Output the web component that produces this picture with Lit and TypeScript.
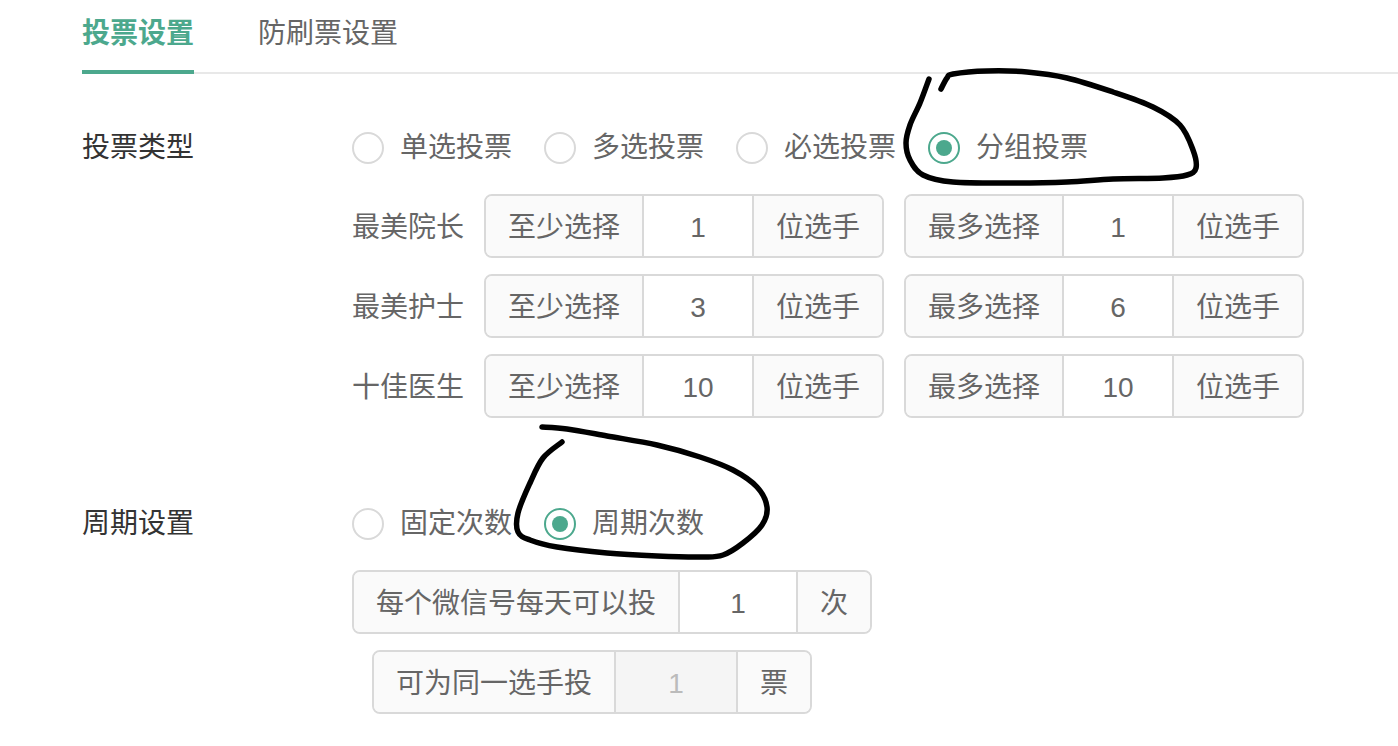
import { LitElement, html, css, svg } from "lit";
import { customElement } from "lit/decorators.js";

type Pt = [number, number];

const strokeA: Pt[] = [[929,79],[920,103],[910,125],[906,143],[910,160],[923,175],[953,182],[1013,183],[1067,182],[1113,179],[1163,178],[1187,175],[1196,168],[1193,150],[1180,125],[1153,107],[1113,92],[1067,78],[1027,72],[987,71],[953,74],[947,78],[941,89]];
const strokeB: Pt[] = [[542,427],[567,429],[607,436],[657,445],[700,457],[733,470],[757,487],[767,507],[762,525],[743,543],[723,555],[703,557],[657,556],[607,553],[557,547],[530,540],[518,532],[518,513],[530,483],[543,458],[562,442]];

function smooth(p: Pt[]): string {
  let d = `M${p[0][0]} ${p[0][1]}`;
  for (let i = 0; i < p.length - 1; i++) {
    const a = p[Math.max(i - 1, 0)], b = p[i], c = p[i + 1], e = p[Math.min(i + 2, p.length - 1)];
    const c1x = b[0] + (c[0] - a[0]) / 6, c1y = b[1] + (c[1] - a[1]) / 6;
    const c2x = c[0] - (e[0] - b[0]) / 6, c2y = c[1] - (e[1] - b[1]) / 6;
    d += `C${c1x.toFixed(1)} ${c1y.toFixed(1)} ${c2x.toFixed(1)} ${c2y.toFixed(1)} ${c[0]} ${c[1]}`;
  }
  return d;
}

@customElement("app-root")
export class AppRoot extends LitElement {
  static styles = css`
    :host {
      display: block;
      position: relative;
      height: 746px;
      overflow: hidden;
      background: #fff;
      color: #666;
      font: 28px/40px "Liberation Sans", "Noto Sans CJK SC", sans-serif;
    }
    .page { padding-left: 82px; }
    .tabs {
      display: flex;
      gap: 64px;
      height: 72px;
      border-bottom: 2px solid #e8e8e8;
      box-sizing: content-box;
    }
    .tab { padding-top: 14px; height: 58px; position: relative; }
    .tab.active { color: #4ca88d; font-weight: 700; }
    .tab.active::after {
      content: "";
      position: absolute;
      left: 0;
      right: 0;
      bottom: -2px;
      height: 4px;
      background: #4ca88d;
    }
    .row { display: grid; grid-template-columns: 270px 1fr; }
    .row.first { margin-top: 58px; }
    .row.second { margin-top: 90px; }
    .label { color: #333; height: 32px; line-height: 32px; }
    .content { display: flex; flex-direction: column; }
    .radios { display: flex; gap: 32px; height: 32px; }
    .radio { display: flex; align-items: center; gap: 16px; width: 160px; }
    .dot {
      width: 32px;
      height: 32px;
      box-sizing: border-box;
      border: 2px solid #d9d9d9;
      border-radius: 50%;
      flex: none;
      display: flex;
      align-items: center;
      justify-content: center;
    }
    .radio.on .dot { border-color: #4ca88d; }
    .radio.on .dot::after {
      content: "";
      width: 16px;
      height: 16px;
      border-radius: 50%;
      background: #4ca88d;
    }
    .grp-rows { display: flex; flex-direction: column; gap: 16px; margin-top: 30px; }
    .grp-row { display: flex; align-items: center; }
    .name { width: 132px; flex: none; padding-top: 4px; }
    .grp {
      display: inline-flex;
      align-items: stretch;
      height: 64px;
      box-sizing: border-box;
      border: 2px solid #d9d9d9;
      border-radius: 8px;
      overflow: hidden;
    }
    .grp + .grp { margin-left: 20px; }
    .addon {
      padding: 4px 22px 0;
      background: #fafafa;
      display: flex;
      align-items: center;
      white-space: nowrap;
    }
    .val {
      display: flex;
      align-items: center;
      justify-content: center;
      background: #fff;
      border-left: 2px solid #d9d9d9;
      border-right: 2px solid #d9d9d9;
      padding-top: 4px;
      box-sizing: border-box;
    }
    .w108 { width: 112px; }
    .w116 { width: 120px; }
    .w120 { width: 124px; }
    .val.off { background: #f5f5f5; color: #bbb; }
    .period { display: flex; flex-direction: column; align-items: flex-start; gap: 16px; margin-top: 30px; }
    .indent { margin-left: 20px; }
    .ink {
      position: absolute;
      inset: 0;
      pointer-events: none;
    }
    .ink path {
      fill: none;
      stroke: #000;
      stroke-width: 5.5;
      stroke-linecap: round;
      stroke-linejoin: round;
    }
  `;

  private radio(text: string, on = false) {
    return html`<div class="radio ${on ? "on" : ""}"><span class="dot"></span><span>${text}</span></div>`;
  }

  private group(prefix: string, value: string, suffix: string, width: string, off = false, extra = "") {
    return html`<div class="grp ${extra}">
      <div class="addon">${prefix}</div>
      <div class="val ${width} ${off ? "off" : ""}">${value}</div>
      <div class="addon">${suffix}</div>
    </div>`;
  }

  render() {
    const rows = [
      ["最美院长", "1", "1"],
      ["最美护士", "3", "6"],
      ["十佳医生", "10", "10"],
    ];
    return html`
      <div class="page">
        <div class="tabs">
          <div class="tab active">投票设置</div>
          <div class="tab">防刷票设置</div>
        </div>
        <div class="row first">
          <div class="label">投票类型</div>
          <div class="content">
            <div class="radios">
              ${this.radio("单选投票")}${this.radio("多选投票")}${this.radio("必选投票")}${this.radio("分组投票", true)}
            </div>
            <div class="grp-rows">
              ${rows.map(
                ([n, a, b]) => html`<div class="grp-row">
                  <div class="name">${n}</div>
                  ${this.group("至少选择", a, "位选手", "w108")}
                  ${this.group("最多选择", b, "位选手", "w108")}
                </div>`
              )}
            </div>
          </div>
        </div>
        <div class="row second">
          <div class="label">周期设置</div>
          <div class="content">
            <div class="radios">${this.radio("固定次数")}${this.radio("周期次数", true)}</div>
            <div class="period">
              ${this.group("每个微信号每天可以投", "1", "次", "w116")}
              ${this.group("可为同一选手投", "1", "票", "w120", true, "indent")}
            </div>
          </div>
        </div>
      </div>
      <svg class="ink" width="1398" height="746" viewBox="0 0 1398 746">
        ${svg`<path d=${smooth(strokeA)}></path><path d=${smooth(strokeB)}></path>`}
      </svg>
    `;
  }
}
